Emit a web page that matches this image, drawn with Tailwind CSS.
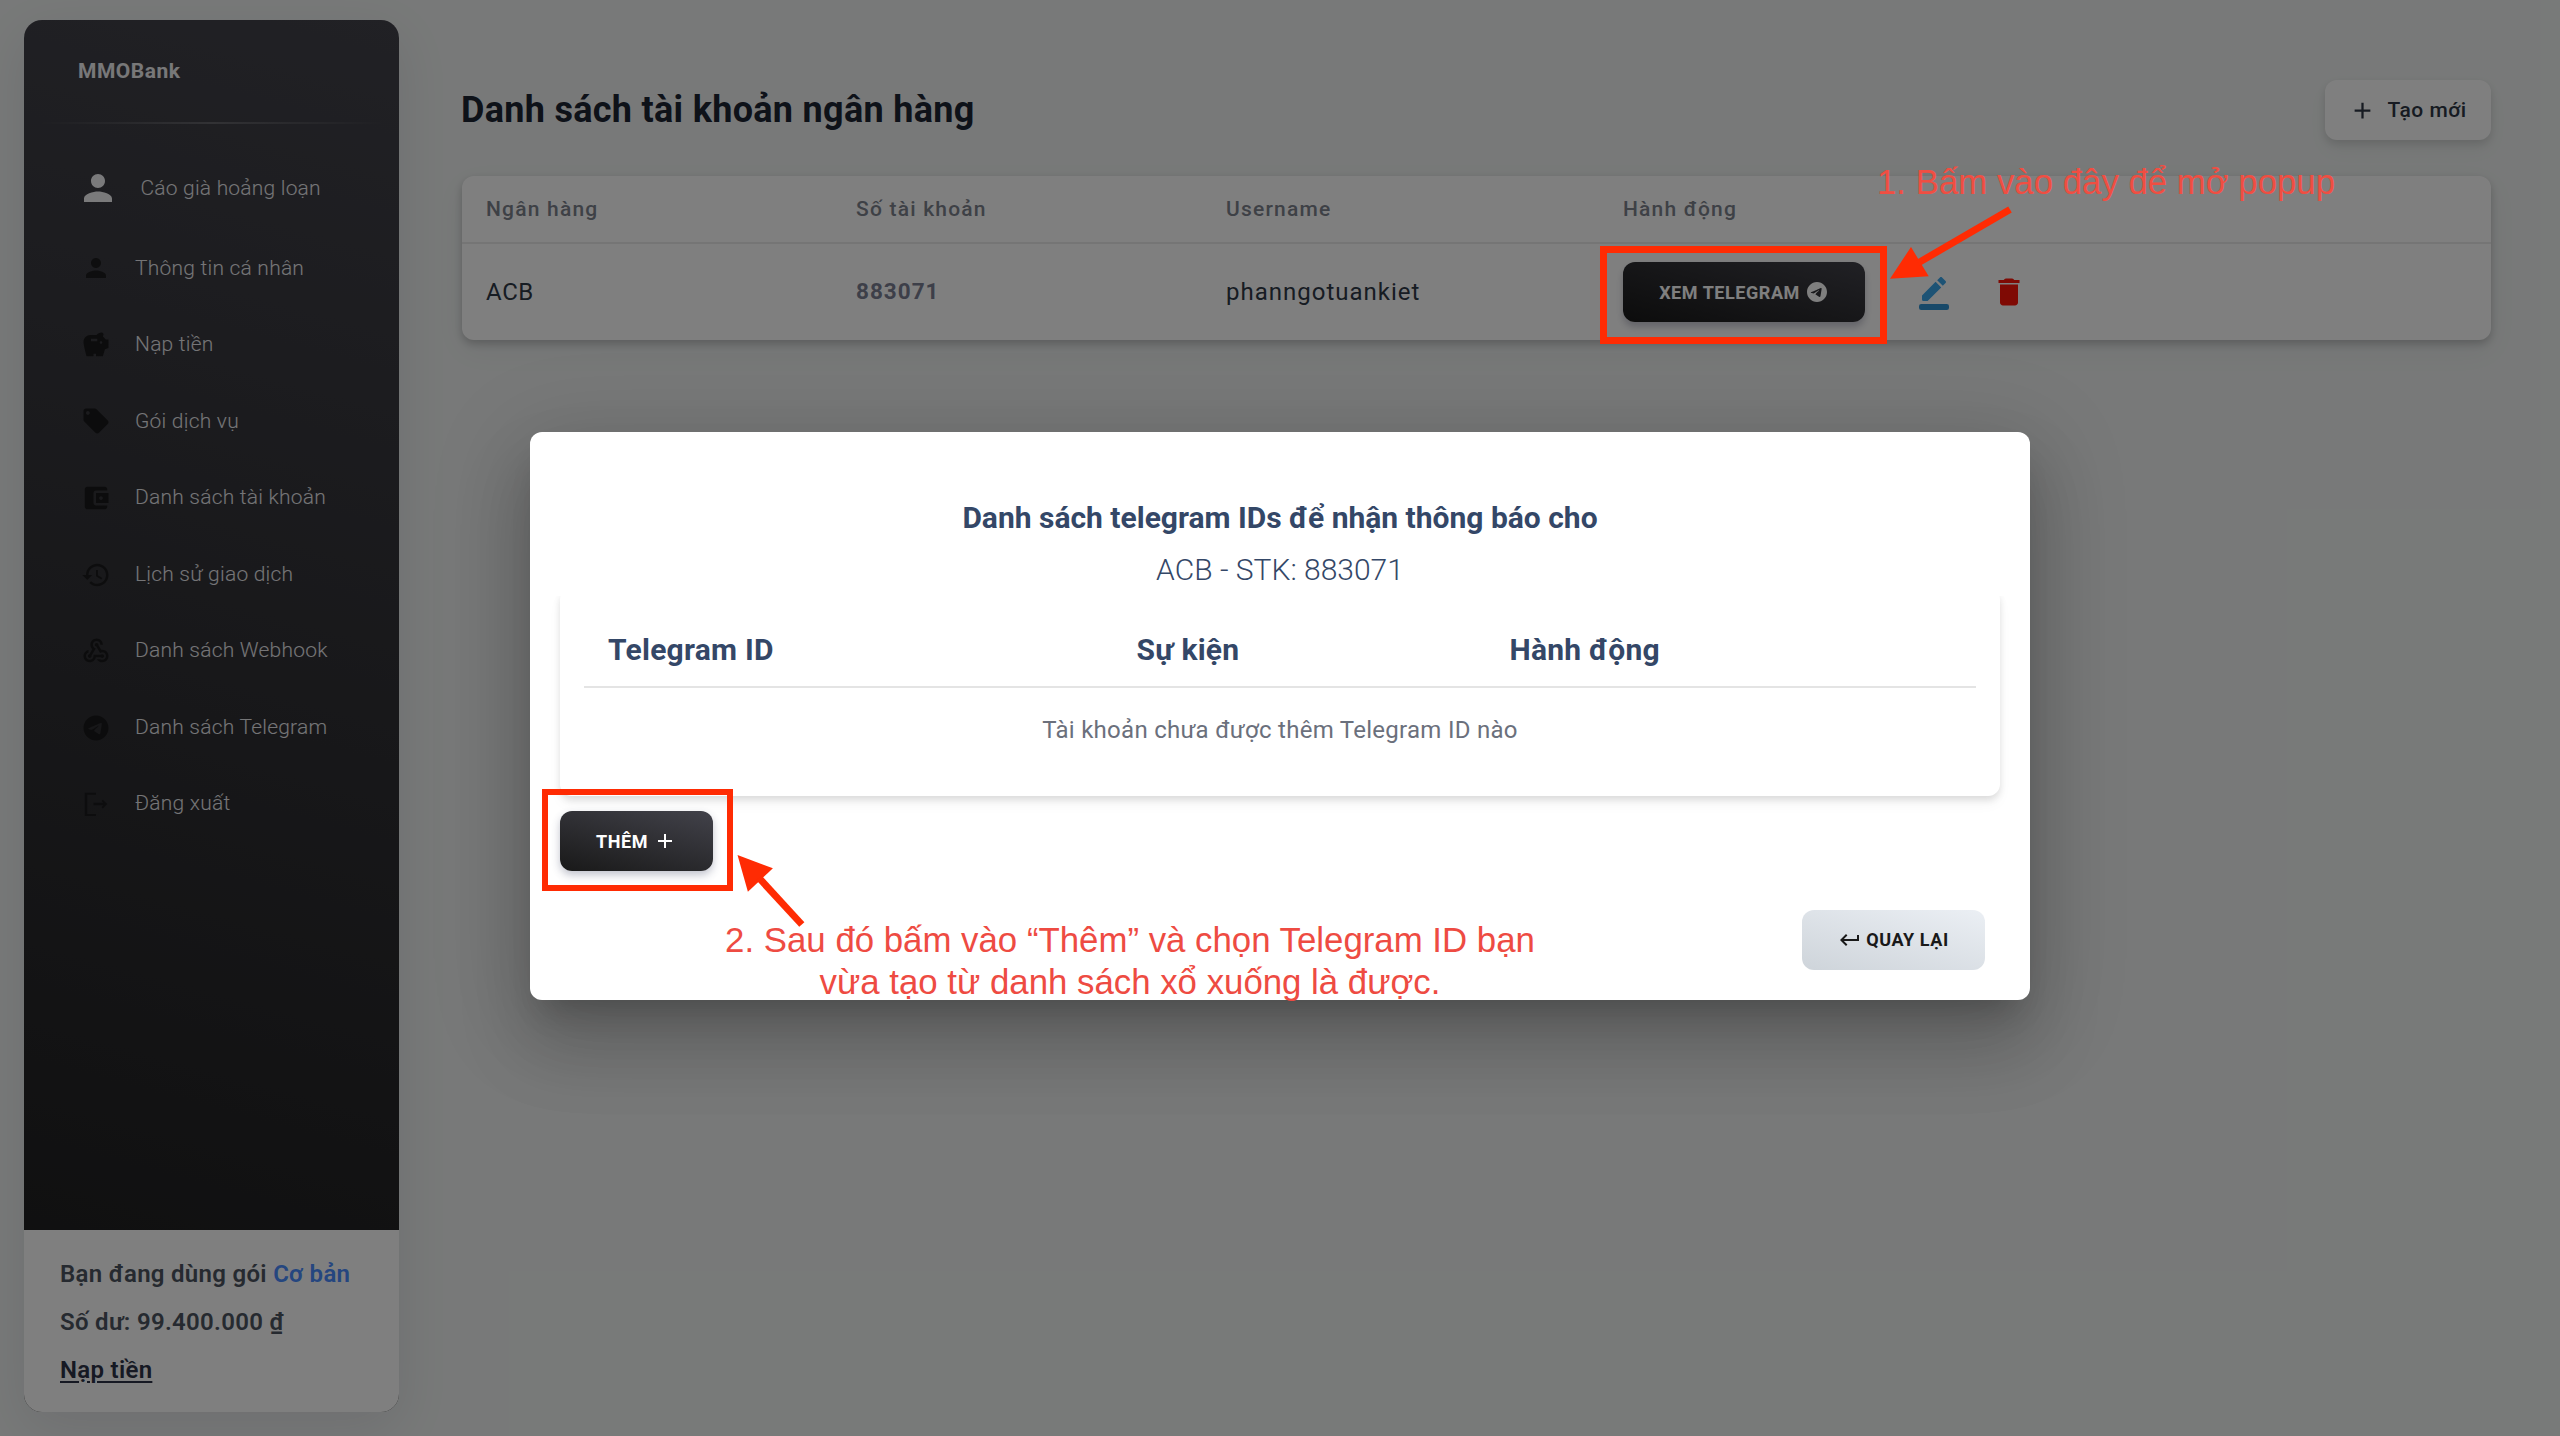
<!DOCTYPE html>
<html lang="vi">
<head>
<meta charset="utf-8">
<title>MMOBank</title>
<script src="https://cdn.jsdelivr.net/npm/@tailwindcss/browser@4"></script>
</head>
<body class="relative h-[1436px] w-[2560px] overflow-hidden bg-[#f0f3f2] font-['Roboto',sans-serif]">

<div class="flex h-full">
  <!-- Sidebar -->
  <aside class="mt-5 ml-6 flex h-[1392px] w-[375px] shrink-0 flex-col overflow-hidden rounded-[18px] bg-[linear-gradient(195deg,#42424a,#1c1c1c)] shadow-[0_16px_54px_rgba(20,10,50,0.09)]">
    <div class="flex h-[102px] items-center pt-px pl-[54px] text-[21px] font-bold tracking-[0.5px] text-[#f0f0f2]">MMOBank</div>
    <div class="mx-4 h-0.5 bg-linear-to-r from-transparent via-white/20 to-transparent"></div>
    <div class="mt-[43px] flex h-[42px] items-center text-[21px] font-light tracking-[0.2px] text-[#ebebef]">
      <svg class="ml-[53px] size-[42px] fill-[#f4f4f6]" viewBox="0 0 24 24"><path d="M12 12c2.21 0 4-1.79 4-4s-1.79-4-4-4-4 1.79-4 4 1.79 4 4 4zm0 2c-2.67 0-8 1.34-8 4v2h16v-2c0-2.66-5.33-4-8-4z"/></svg>
      <span class="ml-[21.5px] pt-px">Cáo già hoảng loạn</span>
    </div>
    <nav class="mt-[21px] flex flex-col text-[21px] font-light tracking-[0.22px] text-[#ebebef]">
      <a class="flex h-[76.57px] items-center gap-6 pl-[57px]"><svg class="size-[30px] fill-[#1d1d1e]" viewBox="0 0 24 24"><path d="M12 12c2.21 0 4-1.79 4-4s-1.79-4-4-4-4 1.79-4 4 1.79 4 4 4zm0 2c-2.67 0-8 1.34-8 4v2h16v-2c0-2.66-5.33-4-8-4z"/></svg>Thông tin cá nhân</a>
      <a class="flex h-[76.57px] items-center gap-6 pl-[57px]"><svg class="size-[30px] fill-[#19191a]" viewBox="0 0 24 24"><path d="m19.83 7.5-2.27-2.27c.07-.42.18-.81.32-1.15.08-.18.12-.37.12-.58 0-.83-.67-1.5-1.5-1.5-1.64 0-3.09.79-4 2h-5C4.46 4 2 6.46 2 9.5S4.5 21 4.5 21H10v-2h2v2h5.5l1.68-5.59 2.82-.94V7.5h-2.17zM13 9H8V7h5v2zm3 2c-.55 0-1-.45-1-1s.45-1 1-1 1 .45 1 1-.45 1-1 1z"/></svg>Nạp tiền</a>
      <a class="flex h-[76.57px] items-center gap-6 pl-[57px]"><svg class="size-[30px] fill-[#19191a]" viewBox="0 0 24 24"><path d="m21.41 11.58-9-9C12.05 2.22 11.55 2 11 2H4c-1.1 0-2 .9-2 2v7c0 .55.22 1.05.59 1.42l9 9c.36.36.86.58 1.41.58.55 0 1.05-.22 1.41-.59l7-7c.37-.36.59-.86.59-1.41 0-.55-.23-1.06-.59-1.42zM5.5 7C4.67 7 4 6.33 4 5.5S4.67 4 5.5 4 7 4.67 7 5.5 6.33 7 5.5 7z"/></svg>Gói dịch vụ</a>
      <a class="flex h-[76.57px] items-center gap-6 pl-[57px]"><svg class="size-[30px] fill-[#19191a]" viewBox="0 0 24 24"><path d="M21 18v1c0 1.1-.9 2-2 2H5c-1.11 0-2-.9-2-2V5c0-1.1.89-2 2-2h14c1.1 0 2 .9 2 2v1h-9c-1.11 0-2 .9-2 2v8c0 1.1.89 2 2 2h9zm-9-2h10V8H12v8zm4-2.500c-.83 0-1.5-.67-1.5-1.5s.67-1.5 1.5-1.5 1.5.67 1.5 1.5-.67 1.5-1.5 1.5z"/></svg>Danh sách tài khoản</a>
      <a class="flex h-[76.57px] items-center gap-6 pl-[57px]"><svg class="size-[30px] fill-[#1b1b1c]" viewBox="0 0 24 24"><path d="M13 3c-4.97 0-9 4.03-9 9H1l3.89 3.89.07.14L9 12H6c0-3.87 3.13-7 7-7s7 3.13 7 7-3.13 7-7 7c-1.93 0-3.68-.79-4.94-2.06l-1.42 1.42C8.27 19.99 10.51 21 13 21c4.97 0 9-4.03 9-9s-4.03-9-9-9zm-1 5v5l4.28 2.54.72-1.210-3.5-2.08V8H12z"/></svg>Lịch sử giao dịch</a>
      <a class="flex h-[76.57px] items-center gap-6 pl-[57px]"><svg class="size-[30px] fill-[#19191a]" viewBox="0 0 24 24"><path d="M10 15h5.88c.27-.31.67-.5 1.12-.5.83 0 1.5.67 1.5 1.5s-.67 1.5-1.5 1.5c-.44 0-.84-.19-1.12-.5H11.9c-.46 2.28-2.48 4-4.900 4-2.76 0-5-2.24-5-5 0-2.42 1.72-4.44 4-4.900v2.070c-1.16.41-2 1.53-2 2.83 0 1.65 1.35 3 3 3s3-1.35 3-3v-1zm2.500-11c1.65 0 3 1.35 3 3h2c0-2.76-2.24-5-5-5s-5 2.24-5 5c0 1.43.6 2.71 1.55 3.62l-2.35 3.900c-.68.14-1.2.75-1.2 1.48 0 .83.67 1.5 1.5 1.5s1.5-.67 1.5-1.500c0-.16-.02-.31-.07-.45l3.38-5.63C10.490 9.610 9.500 8.420 9.500 7c0-1.650 1.350-3 3-3zm4.500 9c-.64 0-1.23.2-1.72.54l-3.050-5.070C11.530 8.350 11 7.740 11 7c0-.83.67-1.5 1.5-1.500S14 6.170 14 7c0 .15-.02.29-.06.43l2.190 3.650c.28-.05.57-.08.87-.08 2.760 0 5 2.240 5 5s-2.240 5-5 5c-1.850 0-3.470-1.010-4.330-2.500h2.670c.48.32 1.050.5 1.660.5 1.650 0 3-1.350 3-3s-1.350-3-3-3z"/></svg>Danh sách Webhook</a>
      <a class="flex h-[76.57px] items-center gap-6 pl-[57px]"><svg class="size-[30px] fill-[#19191a]" viewBox="0 0 24 24"><path d="M12 2C6.48 2 2 6.48 2 12s4.480 10 10 10 10-4.480 10-10S17.520 2 12 2zm4.640 6.800c-.15 1.580-.8 5.420-1.130 7.190-.14.75-.42 1-.68 1.030-.58.05-1.020-.38-1.580-.75-.88-.58-1.380-.94-2.230-1.500-.99-.65-.35-1.010.22-1.590.15-.15 2.710-2.480 2.760-2.690a.2.2 0 0 0-.05-.18c-.06-.05-.14-.03-.21-.02-.09.02-1.490.95-4.220 2.790-.4.27-.76.41-1.080.4-.36-.01-1.040-.2-1.550-.37-.63-.2-1.120-.31-1.080-.66.02-.18.27-.36.74-.55 2.920-1.270 4.860-2.110 5.830-2.510 2.780-1.160 3.350-1.360 3.730-1.360.08 0 .27.02.39.12.1.08.13.19.14.27-.01.06.01.24 0 .38z"/></svg>Danh sách Telegram</a>
      <a class="flex h-[76.57px] items-center gap-6 pl-[57px]"><svg class="size-[30px] fill-[#1b1b1c]" viewBox="0 0 24 24"><path d="m17.500 8.500-1.100 1.100L17.900 11H10v2h7.900l-1.500 1.400 1.100 1.100L21 12zM5 4.500h7V3H3v18.500h9V20H5V4.500z"/></svg>Đăng xuất</a>
    </nav>
    <div class="mt-auto h-[182px] bg-white pt-[19.5px] pl-9 text-[24px]/[48px] font-semibold tracking-[0.3px] text-[#4d5561]">
      <p>Bạn đang dùng gói <span class="text-[#4a8cff]">Cơ bản</span></p>
      <p>Số dư: 99.400.000 ₫</p>
      <p><a class="text-[#2c3247] underline decoration-2 underline-offset-[3px]">Nạp tiền</a></p>
    </div>
  </aside>

  <!-- Page content -->
  <main class="mt-20 ml-[63px] w-[2029px]">
    <div class="flex h-[60px] items-center justify-between">
      <h1 class="-ml-px text-[36px] font-bold tracking-[0.3px] text-[#1c2432]">Danh sách tài khoản ngân hàng</h1>
      <button class="flex h-[60px] w-[166px] items-center gap-3 rounded-xl bg-white pl-[23.5px] text-[21px] font-medium tracking-[0.5px] text-[#2e3744] shadow-[0_4px_8px_rgba(0,0,0,0.12),0_10px_20px_rgba(0,0,0,0.04)]">
        <svg class="size-[27px] fill-current" viewBox="0 0 24 24"><path d="M19 13h-6v6h-2v-6H5v-2h6V5h2v6h6v2z"/></svg><span class="pt-px">Tạo mới</span>
      </button>
    </div>
    <section class="mt-9 h-[164px] rounded-xl bg-white shadow-[0_4px_9px_rgba(0,0,0,0.2),0_10px_30px_rgba(20,20,60,0.05)]">
      <div class="grid h-[68px] grid-cols-[370px_370px_397px_1fr] items-center border-b-2 border-[#ebebeb] pt-px pl-6 text-[21px] font-medium tracking-[1.2px] text-[#7d828d]">
        <span>Ngân hàng</span><span>Số tài khoản</span><span>Username</span><span>Hành động</span>
      </div>
      <div class="grid h-24 grid-cols-[370px_370px_397px_1fr] items-center pl-6 text-[24px] tracking-[1px] text-[#2f3846]">
        <span class="tracking-[0.6px]">ACB</span><span class="-mt-px text-[22.5px] font-bold text-[#7b7f93]">883071</span><span>phanngotuankiet</span>
        <div class="flex items-center">
          <button class="flex h-[60px] w-[242px] items-center justify-center gap-[5px] rounded-xl bg-[linear-gradient(195deg,#42424a,#191919)] text-[18px] font-bold tracking-[0.55px] text-white shadow-[0_5px_7px_rgba(40,40,80,0.25)]">XEM TELEGRAM<svg class="size-6 fill-white" viewBox="0 0 24 24"><path d="M12 2C6.480 2 2 6.480 2 12s4.480 10 10 10 10-4.480 10-10S17.520 2 12 2zm4.640 6.800c-.15 1.580-.8 5.420-1.130 7.190-.14.75-.42 1-.68 1.030-.58.05-1.020-.38-1.580-.75-.88-.58-1.380-.94-2.230-1.500-.99-.65-.35-1.010.22-1.590.15-.15 2.710-2.480 2.760-2.690a.2.2 0 0 0-.05-.18c-.06-.05-.14-.03-.21-.02-.09.02-1.490.95-4.220 2.790-.4.27-.76.41-1.080.4-.36-.01-1.040-.2-1.550-.37-.63-.2-1.120-.31-1.080-.66.02-.18.27-.36.74-.55 2.920-1.270 4.860-2.110 5.830-2.510 2.780-1.160 3.350-1.360 3.730-1.360.08 0 .27.02.39.12.1.08.13.19.14.27-.01.06.01.24 0 .38z"/></svg></button>
          <svg class="ml-[51px] size-9" viewBox="0 0 24 24"><path fill="#3ba6ea" d="M13.060 5.190l3.750 3.750L7.750 18H5a1 1 0 0 1-1-1v-2.750l9.060-9.060zm4.820 2.680-3.750-3.750 1.830-1.830c.39-.39 1.020-.39 1.410 0l2.340 2.340c.39.39.39 1.020 0 1.410l-1.830 1.830z"/><rect x="2" y="20" width="20" height="4" rx="1.500" fill="#3092d2"/></svg>
          <svg class="ml-[39px] size-9 fill-[#ff1408]" viewBox="0 0 24 24"><path d="M6 19c0 1.100.9 2 2 2h8c1.100 0 2-.9 2-2V7H6v12zM19 4h-3.500c-.5-.8-1.300-1-2-1h-3c-.7 0-1.500.2-2 1H5v2h14V4z"/></svg>
        </div>
      </div>
    </section>
  </main>
</div>

<!-- Modal -->
<div class="absolute inset-0 flex items-start justify-center bg-black/50 pt-[432px]">
  <div class="flex h-[568px] w-[1500px] flex-col rounded-xl bg-white shadow-[0_22px_30px_-14px_rgba(0,0,0,0.2),0_44px_70px_6px_rgba(0,0,0,0.14),0_18px_92px_16px_rgba(0,0,0,0.12)]">
    <h2 class="mt-[60px] text-center text-[30px]/[52px] font-bold text-[#344767]">Danh sách telegram IDs để nhận thông báo cho</h2>
    <p class="text-center text-[30px]/[52px] font-light text-[#344767]">ACB - STK: 883071</p>
    <div class="-mb-6 overflow-hidden px-[30px] pt-1 pb-10">
      <div class="-mt-3 rounded-xl px-6 pt-6 pb-6 shadow-[0_4px_7px_rgba(0,0,0,0.11),0_8px_14px_rgba(0,0,0,0.04)]">
        <div class="grid h-[76px] grid-cols-[528.5px_373px_1fr] items-center border-b-2 border-[#e4e4e4] pl-6 text-[30px] font-bold tracking-[0.25px] text-[#344767]">
          <span>Telegram ID</span><span>Sự kiện</span><span>Hành động</span>
        </div>
        <p class="h-[84px] text-center text-[24px]/[84px] tracking-[0.28px] text-[#6b707c]">Tài khoản chưa được thêm Telegram ID nào</p>
      </div>
    </div>
    <button class="relative -mt-px ml-[30px] flex h-[60px] w-[153px] shrink-0 items-center justify-center gap-[5px] rounded-xl bg-[linear-gradient(195deg,#42424a,#191919)] text-[18px] font-bold tracking-[0.55px] text-white shadow-[0_4px_8px_rgba(50,55,90,0.3)]">THÊM<svg class="size-6 fill-white" viewBox="0 0 24 24"><path d="M19 13h-6v6h-2v-6H5v-2h6V5h2v6h6v2z"/></svg></button>
    <button class="mt-auto mr-[45px] mb-[30px] flex h-[60px] w-[183px] items-center justify-center gap-[4px] self-end rounded-xl bg-[linear-gradient(195deg,#ebeff4,#ced4da)] text-[18px] font-bold tracking-[0.6px] text-[#191919]"><svg class="size-6 fill-current" viewBox="0 0 24 24"><path d="M19 7v4H5.830l3.580-3.590L8 6l-6 6 6 6 1.410-1.410L5.830 13H21V7z"/></svg><span class="-mt-px">QUAY LẠI</span></button>
  </div>
</div>

<!-- Guide annotations -->
<div class="absolute top-[246px] left-[1600px] h-[98px] w-[287px] border-[7px] border-[#ff2b03]"></div>
<div class="absolute top-[789px] left-[542px] h-[102px] w-[191px] border-[6.500px] border-[#ff2b03]"></div>
<svg class="absolute inset-0" width="2560" height="1436" viewBox="0 0 2560 1436">
  <g fill="#ff2b03" stroke="#ff2b03">
    <path stroke="none" d="M1890 278.700 1911 247 1928.700 276.300z"/>
    <path stroke-width="7" d="M1918 263 2010 209.500"/>
    <path stroke="none" d="M737.500 855 772.900 868.300 747.900 891.700z"/>
    <path stroke-width="7" d="M759 878 801.800 924.500"/>
  </g>
</svg>
<p class="absolute top-[161px] left-[1877px] font-['Liberation_Sans',sans-serif] text-[34.8px]/[42px] whitespace-nowrap text-[#f04e42]">1. Bấm vào đây để mở popup</p>
<p class="absolute top-[919px] left-[680px] w-[900px] text-center font-['Liberation_Sans',sans-serif] text-[34.8px]/[42px] text-[#ee4b42]">2. Sau đó bấm vào “Thêm” và chọn Telegram ID bạn<br>vừa tạo từ danh sách xổ xuống là được.</p>
</body>
</html>
